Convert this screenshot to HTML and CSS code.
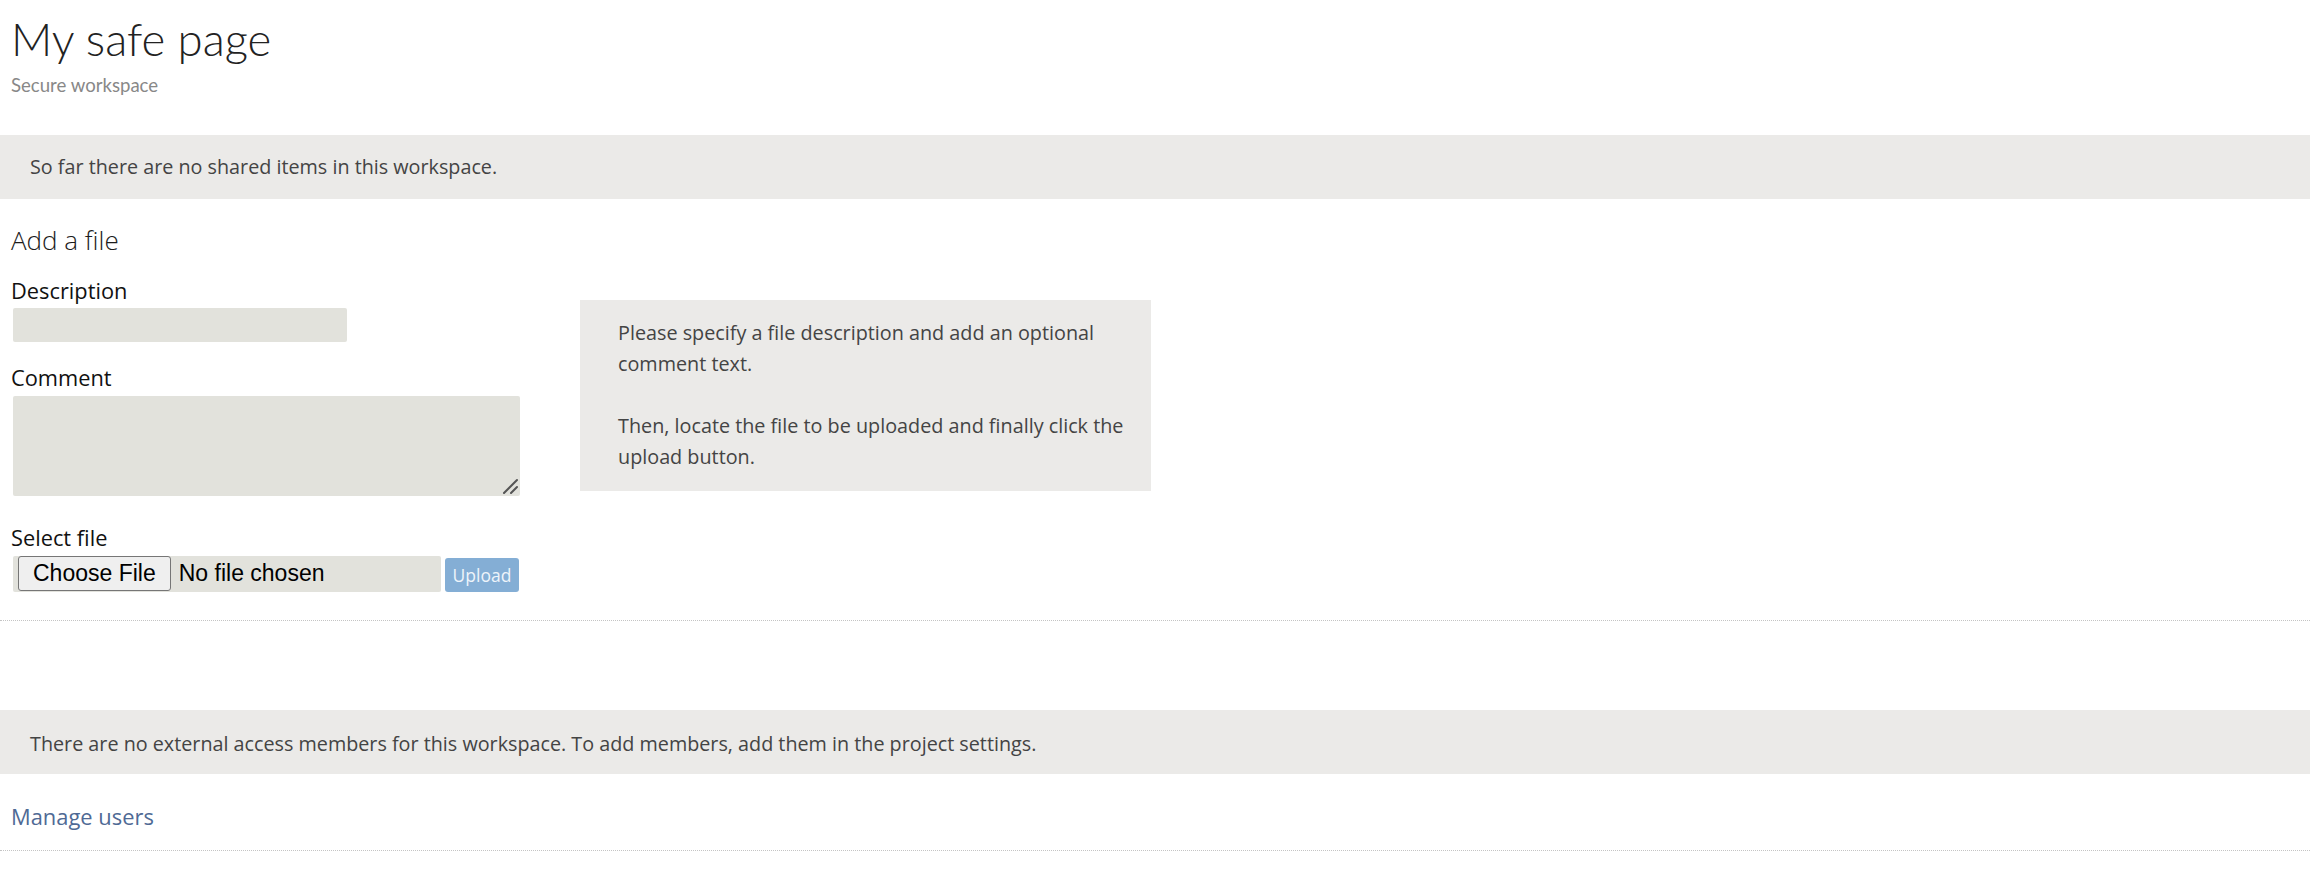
FILE: index.html
```html
<!DOCTYPE html>
<html lang="en">
<head>
<meta charset="utf-8">
<title>My safe page</title>
<link rel="stylesheet" href="styles.css">
</head>
<body>
<header class="page-header">
  <h1 class="page-title">My safe page</h1>
  <div class="page-subtitle">Secure workspace</div>
</header>

<div class="notice notice-shared">So far there are no shared items in this workspace.</div>

<section class="upload-section">
  <h2 class="section-title">Add a file</h2>
  <div class="upload-row">
    <form class="upload-form">
      <label class="field-label" for="desc">Description</label>
      <input class="text-input" id="desc" type="text">
      <label class="field-label field-label-comment" for="comment">Comment</label>
      <div class="textarea-wrap">
        <textarea class="text-area" id="comment"></textarea>
        <svg class="resize-grip" width="16" height="16" viewBox="0 0 16 16" aria-hidden="true">
          <path d="M2 15 L15 2" stroke="#555" stroke-width="2" stroke-linecap="round"/>
          <path d="M9 15 L15 9" stroke="#555" stroke-width="2" stroke-linecap="round"/>
        </svg>
      </div>
      <label class="field-label field-label-file" for="file">Select file</label>
      <div class="file-row">
        <input class="file-input" id="file" type="file">
        <button class="upload-btn" type="button">Upload</button>
      </div>
    </form>
    <div class="help-box">
      <p>Please specify a file description and add an optional comment text.</p>
      <p>Then, locate the file to be uploaded and finally click the upload button.</p>
    </div>
  </div>
</section>

<hr class="divider">

<div class="notice notice-members">There are no external access members for this workspace. To add members, add them in the project settings.</div>

<div class="manage">
  <a class="manage-link" href="#">Manage users</a>
</div>

<hr class="divider">
</body>
</html>
```

FILE: styles.css
```css
html, body {
  margin: 0;
  padding: 0;
  background: #ffffff;
}

body {
  font-family: "Open Sans", "Noto Sans", sans-serif;
  color: #444444;
}

.page-header {
  padding: 10px 11px 0 11px;
}

.page-title {
  margin: 0;
  font-family: Lato, "Open Sans", sans-serif;
  font-weight: 300;
  font-size: 45.5px;
  line-height: 58px;
  color: #222222;
}

.page-subtitle {
  margin-top: 5px;
  font-family: Lato, "Open Sans", sans-serif;
  font-size: 18.6px;
  line-height: 24px;
  color: #888888;
}

.notice {
  background: #ebeae8;
  height: 64px;
  line-height: 64px;
  padding-left: 30px;
  font-size: 19.75px;
  color: #444444;
}

.notice-shared {
  margin-top: 38px;
}

.notice-members {
  margin-top: 89px;
  line-height: 67px;
}

.upload-section {
  padding: 0 11px;
}

.section-title {
  margin: 24px 0 0 0;
  font-weight: 300;
  font-size: 26px;
  line-height: 34px;
  color: #1c1c1c;
}

.upload-row {
  display: flex;
  align-items: flex-start;
  gap: 60px;
}

.upload-form {
  width: 509px;
  display: flex;
  flex-direction: column;
  align-items: flex-start;
}

.field-label {
  display: block;
  margin-top: 20px;
  font-size: 21.8px;
  line-height: 28px;
  color: #111111;
}

.field-label-comment {
  margin-top: 22px;
}

.field-label-file {
  margin-top: 28px;
}

.text-input {
  display: block;
  box-sizing: border-box;
  margin: 3px 0 0 2px;
  width: 334px;
  height: 34px;
  border: none;
  border-radius: 2px;
  background: #e2e2dc;
  font: inherit;
  font-size: 19px;
  padding: 0 6px;
}

.textarea-wrap {
  position: relative;
  margin: 4px 0 0 2px;
  width: 507px;
  height: 100px;
}

.text-area {
  display: block;
  box-sizing: border-box;
  width: 507px;
  height: 100px;
  border: none;
  border-radius: 2px;
  background: #e2e2dc;
  resize: none;
  font: inherit;
  font-size: 19px;
  padding: 4px 6px;
}

.resize-grip {
  position: absolute;
  right: 2px;
  bottom: 2px;
}

.file-row {
  display: flex;
  align-items: flex-end;
  gap: 4px;
  margin: 4px 0 0 2px;
}

.file-input {
  box-sizing: border-box;
  width: 428px;
  height: 36px;
  padding: 0 0 0 5px;
  background: #e2e2dc;
  border-radius: 2px;
  font-family: "Liberation Sans", Arial, sans-serif;
  font-size: 23px;
  color: #000000;
}

.file-input::file-selector-button {
  height: 35px;
  margin: 0 8px 0 0;
  padding: 0 14px;
  border: 1px solid #767676;
  border-radius: 3px;
  background: #efefef;
  color: #000000;
  font-family: "Liberation Sans", Arial, sans-serif;
  font-size: 23px;
}

.upload-btn {
  width: 74px;
  height: 34px;
  border: none;
  border-radius: 3px;
  background: #84aed5;
  color: #eef4fa;
  font-family: "Open Sans", sans-serif;
  font-size: 17.5px;
  padding: 0;
}

.help-box {
  box-sizing: border-box;
  width: 571px;
  margin-top: 43px;
  padding: 17px 18px 19px 38px;
  background: #ebeae8;
  font-size: 19.8px;
  line-height: 31px;
  color: #444444;
}

.help-box p {
  margin: 0;
}

.help-box p + p {
  margin-top: 31px;
}

.divider {
  margin: 28px 0 0 0;
  border: none;
  border-top: 1px dotted #c4c4c4;
  height: 0;
}

.manage {
  padding: 29px 11px 0 11px;
}

.manage-link {
  font-size: 21.9px;
  line-height: 28px;
  color: #4f6a95;
  text-decoration: none;
}

.manage + .divider {
  margin-top: 19px;
}
```
